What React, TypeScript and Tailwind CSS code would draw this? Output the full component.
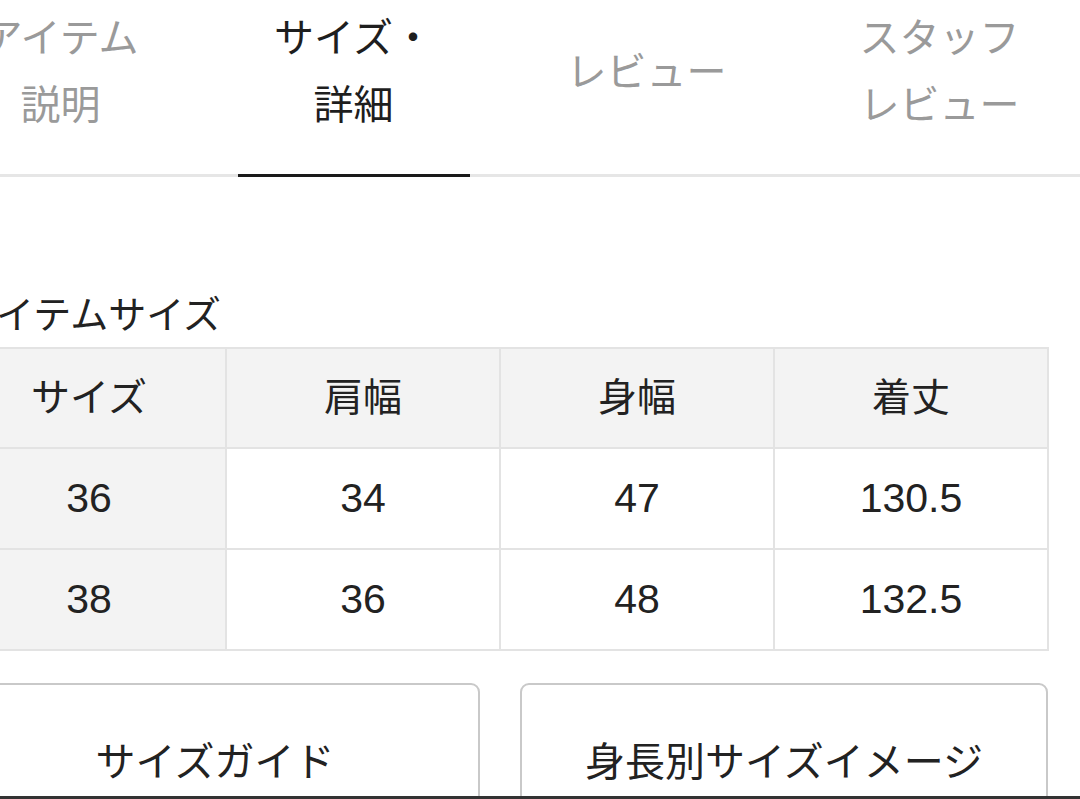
const tabs = [
  { label: ["アイテム", "説明"], active: false },
  { label: ["サイズ・", "詳細"], active: true },
  { label: ["レビュー"], active: false },
  { label: ["スタッフ", "レビュー"], active: false },
];

const header = ["サイズ", "肩幅", "身幅", "着丈"];
const rows = [
  ["36", "34", "47", "130.5"],
  ["38", "36", "48", "132.5"],
];

export default function App() {
  return (
    <div
      className="relative w-[1080px] h-[799px] overflow-hidden bg-white text-[#222]"
      style={{ fontFamily: '"Liberation Sans", "Noto Sans CJK JP", sans-serif' }}
    >
      {/* Tabs */}
      <div className="flex -ml-[86px] w-[1172px] border-b-[3px] border-[#e6e6e6] h-[177px]">
        {tabs.map((t, i) => (
          <div key={i} className="w-[293px] flex flex-col items-center">
            <div
              className={`flex-1 flex flex-col items-center justify-center text-[40px] leading-[67px] pb-[30px] ${
                t.active ? "text-[#1e1e1e]" : "text-[#9a9a9a]"
              }`}
            >
              {t.label.map((l) => (
                <span key={l}>{l}</span>
              ))}
            </div>
            <div className={`w-[232px] h-[3px] -mb-[3px] ${t.active ? "bg-[#1a1a1a]" : "bg-transparent"}`} />
          </div>
        ))}
      </div>

      {/* Item size */}
      <div className="-ml-[40px] mt-[116px] text-[38px] leading-[44px] text-[#222]">アイテムサイズ</div>

      <table className="-ml-[49px] mt-[10px] border-collapse text-[41px] text-[#222]">
        <thead>
          <tr>
            {header.map((h) => (
              <th
                key={h}
                className="w-[274px] h-[100px] bg-[#f3f3f3] border-2 border-[#e3e3e3] font-normal text-center text-[39px]"
              >
                {h}
              </th>
            ))}
          </tr>
        </thead>
        <tbody>
          {rows.map((r) => (
            <tr key={r[0]}>
              {r.map((c, j) => (
                <td
                  key={j}
                  className={`w-[274px] h-[101px] border-2 border-[#e3e3e3] text-center ${
                    j === 0 ? "bg-[#f3f3f3]" : "bg-white"
                  }`}
                >
                  {c}
                </td>
              ))}
            </tr>
          ))}
        </tbody>
      </table>

      {/* Buttons */}
      <div className="flex gap-[40px] -ml-[50px] mt-[32px]">
        <div className="w-[530px] h-[140px] border-2 border-[#c9c9c9] rounded-[9px] flex items-center justify-center pt-[18px] text-[40px] text-[#222]">
          サイズガイド
        </div>
        <div className="w-[528px] h-[140px] border-2 border-[#c9c9c9] rounded-[9px] flex items-center justify-center pt-[18px] text-[40px] text-[#222]">
          身長別サイズイメージ
        </div>
      </div>

      {/* bottom edge */}
      <div className="absolute left-0 bottom-0 w-full h-[3px] bg-[#333]" />
    </div>
  );
}
